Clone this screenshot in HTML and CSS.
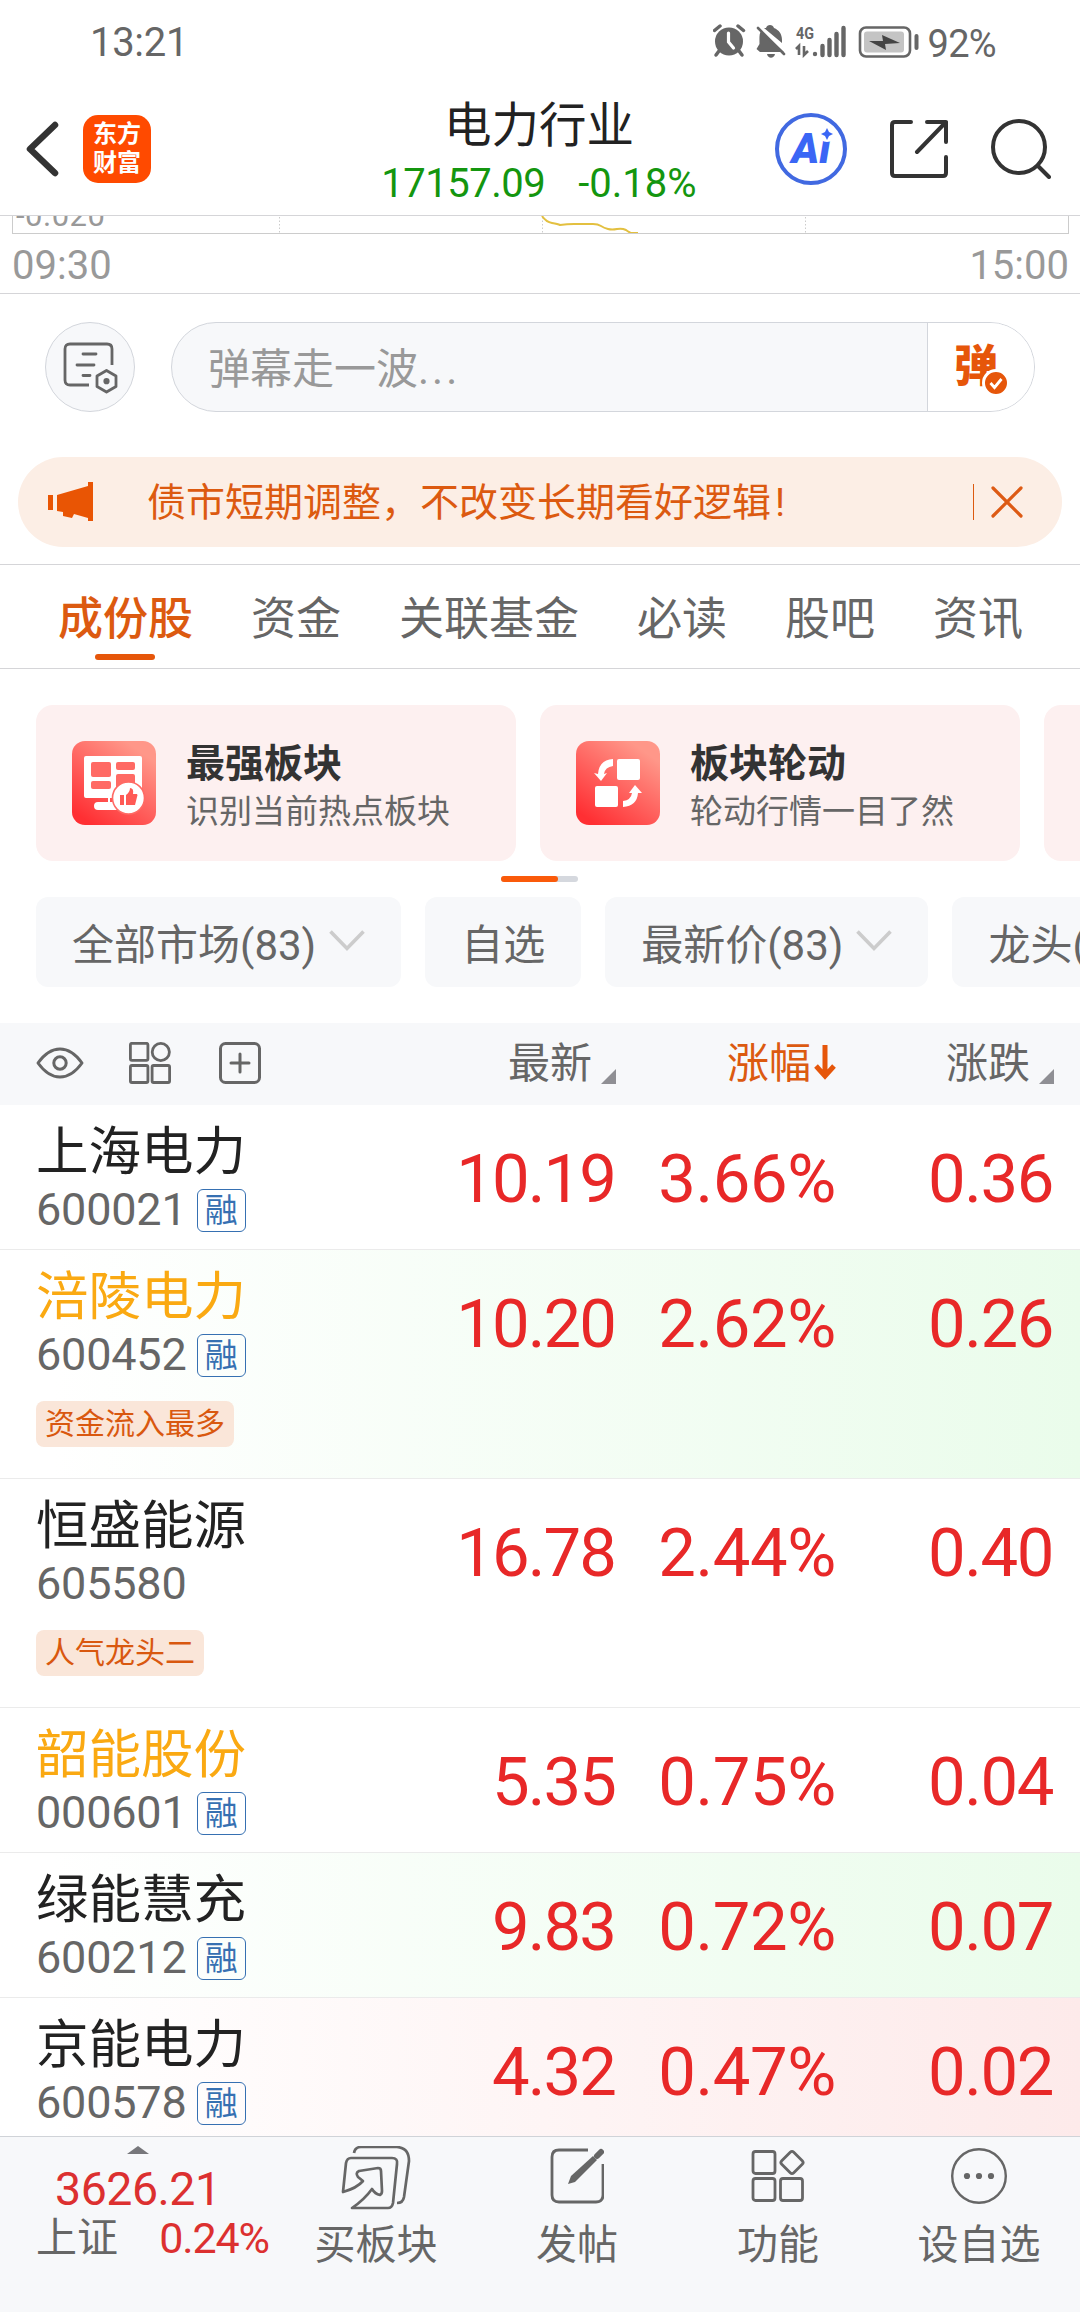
FILE: index.html
```html
<!DOCTYPE html>
<html lang="zh-CN">
<head>
    <meta charset="UTF-8">
    <title>电力行业</title>
    <link rel="stylesheet" href="styles.css">
</head>
<body>
    <div class="status_bar">
        <span class="time">13:21</span>
        <svg class="s_icons" width="208" height="36" viewBox="0 0 208 36" fill="#666">
            <!-- 闹钟 -->
            <circle cx="16" cy="19.500" r="14"/>
            <path d="M1.500 8.500L7 4M30.500 8.500L25 4" stroke="#666" stroke-width="3.500" stroke-linecap="round"/>
            <path d="M6 29l-3 4M26 29l3 4" stroke="#666" stroke-width="3.500" stroke-linecap="round"/>
            <path d="M15.500 11v9l5 6" fill="none" stroke="#fff" stroke-width="3.200" stroke-linecap="round"/>
            <!-- 静音 -->
            <path d="M47 30h24L48 9c-2 3-1.500 8-1.500 13l-3 5zM53 6c1-4 7-4 8 0 5 2 8 6 8 12v3L51 6zM54 32h8c-1 5-7 5-8 0z"/>
            <path d="M45 6l26 26" stroke="#666" stroke-width="2.600" stroke-linecap="round"/>
            <!-- 信号 -->
            <path d="M86 33v-9l-3 3M91 24v9l4-4" fill="none" stroke="#666" stroke-width="2.600"/>
            <circle cx="102" cy="32" r="2.200"/>
            <path d="M109.500 24v9M116.500 18v15M123.500 12v21M130.500 6v27" stroke="#666" stroke-width="4.400" stroke-linecap="round"/>
            <!-- 电池 -->
            <rect x="147" y="5.500" width="50" height="29" rx="6" fill="none" stroke="#666" stroke-width="2.600"/>
            <rect x="151" y="9.500" width="40" height="21" rx="3" fill="#c4c4c4"/>
            <path d="M156 19l14 0-1-6 18 8-15 1 1 6z" fill="#444"/>
            <path d="M203.500 14v12" stroke="#666" stroke-width="4" stroke-linecap="round"/>
            <text class="net" x="83" y="17" textLength="18" lengthAdjust="spacingAndGlyphs">4G</text>
        </svg>
        <span class="power">92%</span>
    </div>

    <div class="header">
        <div class="h_left">
            <svg width="34" height="58" viewBox="0 0 34 58"><path d="M30 5L5 29l25 24" fill="none" stroke="#333" stroke-width="6.500" stroke-linecap="round" stroke-linejoin="round"/></svg>
            <div class="logo"><span>东方</span><span>财富</span></div>
        </div>
        <div class="h_title">
            <h1>电力行业</h1>
            <p><span class="point">17157.09</span><span>-0.18%</span></p>
        </div>
        <div class="h_right">
            <div class="ai">Ai
                <svg width="16" height="16" viewBox="0 0 16 16"><circle cx="8" cy="8" r="8" fill="#fff"/><path d="M8 2l2 4 4 2-4 2-2 4-2-4-4-2 4-2z" fill="#3a66f5"/></svg>
            </div>
            <svg width="58" height="60" viewBox="0 0 58 60" fill="none" stroke="#333" stroke-width="4" stroke-linecap="round" stroke-linejoin="round"><path d="M21 3H5q-3 0-3 3v48q0 3 3 3h48q3 0 3-3V38M37 3h19v20M56 3L27 33"/></svg>
            <svg width="60" height="60" viewBox="0 0 60 60" fill="none" stroke="#333" stroke-width="4" stroke-linecap="round"><circle cx="28" cy="28" r="26"/><path d="M47 47l11 11"/></svg>
        </div>
    </div>

    <div class="chart">
        <div class="chart_box">
            <span>-0.020</span>
            <svg width="1056" height="18" viewBox="0 0 1056 18" fill="none">
                <path d="M266.500 1v17M529.500 1v17M792.500 1v17" stroke="#ccc" stroke-dasharray="1.500 2"/>
                <path d="M529 0q4 6 10 7t8 2q7-1 14-1t10 0t9 0q5 0 8 2t7 3t9 0t9 1q4 3 6 3h6" stroke="#e3c040" stroke-width="2"/>
            </svg>
        </div>
        <div class="chart_time"><span>09:30</span><span>15:00</span></div>
    </div>

    <div class="danmu">
        <div class="dm_set">
            <svg width="56" height="54" viewBox="0 0 56 54" fill="none" stroke="#666" stroke-width="2.800" stroke-linecap="round" stroke-linejoin="round">
                <path d="M27 43H8q-5 0-5-5V7q0-5 5-5h37q5 0 5 5v16" stroke-linecap="butt"/>
                <path d="M21 12h13M15 23h17M21 33.500h7"/>
                <path d="M44.500 28.500l9.500 5.500v10.500l-9.500 5.500-9.500-5.500V34z"/>
                <circle cx="44.500" cy="39.200" r="1.700" fill="#666"/>
            </svg>
        </div>
        <div class="dm_input">
            <span class="dm_text">弹幕走一波<span class="dots">...</span></span>
            <div class="dm_btn">弹
                <svg width="28" height="28" viewBox="0 0 28 28"><circle cx="14" cy="14" r="12.500" fill="#e6560a" stroke="#fff" stroke-width="3"/><path d="M8.500 14l4 4.500 7-8.500" fill="none" stroke="#fff" stroke-width="2.800"/></svg>
            </div>
        </div>
    </div>

    <div class="notice">
        <svg width="46" height="40" viewBox="0 0 46 40" fill="#e95504"><path d="M0 13h5v15H0zM9 13l31-9V0h5v39h-5v-3l-14-4-2 4-9-2v-4l-6-1z"/></svg>
        <span class="n_text">债市短期调整，不改变长期看好逻辑<span class="mark">!</span></span>
        <i></i>
        <svg width="32" height="32" viewBox="0 0 32 32"><path d="M2 2l28 28M30 2L2 30" stroke="#dd5a14" stroke-width="3.200" stroke-linecap="round"/></svg>
    </div>

    <div class="tabs">
        <span class="active">成份股</span>
        <span>资金</span>
        <span>关联基金</span>
        <span>必读</span>
        <span>股吧</span>
        <span>资讯</span>
    </div>

    <div class="cards">
        <div class="card">
            <div class="card_icon">
                <svg width="84" height="84" viewBox="0 0 84 84">
                    <path d="M14 15h54q2 0 2 2v40H38v4h8v8H26q-4 0-4-4t4-4h10v-4H14q-2 0-2-2V17q0-2 2-2z" fill="#fff"/>
                    <g fill="#ff6a64"><rect x="19" y="21" width="20" height="15" rx="2"/><rect x="19" y="40" width="20" height="8" rx="2"/><rect x="44" y="21" width="19" height="8" rx="2"/><rect x="44" y="33" width="19" height="15" rx="2"/></g>
                    <circle cx="56.500" cy="57" r="16" fill="#fff" stroke="#ff6a64" stroke-width="1.600"/>
                    <path d="M48 54h4v10h-4zM54 54q4-3 4-7 4 0 3 6h4q1 1 0 3l-2 8h-9z" fill="#ff5a55"/>
                </svg>
            </div>
            <div><h2>最强板块</h2><p>识别当前热点板块</p></div>
        </div>
        <div class="card">
            <div class="card_icon">
                <svg width="84" height="84" viewBox="0 0 84 84" fill="#fff">
                    <rect x="41" y="18" width="23" height="21" rx="2"/><rect x="19" y="45" width="23" height="21" rx="2"/>
                    <path d="M37 18v7q-8 1-9 8l3-1-6 8-7-8 4 1q1-14 15-15zM47 66v-6q8-1 9-8l-3 0 6-8 7 8h-4q-1 13-15 14z"/>
                </svg>
            </div>
            <div><h2>板块轮动</h2><p>轮动行情一目了然</p></div>
        </div>
        <div class="card"></div>
    </div>
    <div class="slider"><i></i></div>

    <div class="filters">
        <span class="f_item">全部市场(83)<svg width="36" height="22" viewBox="0 0 36 22"><path d="M1.500 1.500L18 18.500l16.500-17" fill="none" stroke="#ccc" stroke-width="3.600"/></svg></span>
        <span class="f_item">自选</span>
        <span class="f_item">最新价(83)<svg width="36" height="22" viewBox="0 0 36 22"><path d="M1.500 1.500L18 18.500l16.500-17" fill="none" stroke="#ccc" stroke-width="3.600"/></svg></span>
        <span class="f_item">龙头(5)</span>
    </div>

    <div class="t_head">
        <div class="t_tools">
            <svg width="48" height="42" viewBox="0 0 48 42" fill="none" stroke="#666" stroke-width="3"><path d="M2 21Q12 7 24 7t22 14Q36 35 24 35T2 21z" stroke-linejoin="round"/><circle cx="24" cy="21" r="6.200"/></svg>
            <svg width="42" height="42" viewBox="0 0 42 42" fill="none" stroke="#666" stroke-width="2.800"><rect x="1.400" y="1.300" width="17.500" height="17" rx="1.500"/><circle cx="31.800" cy="10" r="8.600"/><rect x="1.400" y="23.500" width="17.500" height="17" rx="1.500"/><rect x="23.100" y="23.500" width="17.500" height="17" rx="1.500"/></svg>
            <svg width="42" height="42" viewBox="0 0 42 42" fill="none" stroke="#666" stroke-width="3" stroke-linecap="round"><rect x="1.500" y="1.500" width="39" height="39" rx="5"/><path d="M21 12v18M12 21h18"/></svg>
        </div>
        <div class="col c1">最新<svg width="15" height="15" viewBox="0 0 15 15"><path d="M15 0v15H0z" fill="#8f8f94"/></svg></div>
        <div class="col c2 sort">涨幅<svg width="24" height="36" viewBox="0 0 24 36"><path d="M12 1v30M3 22l9 10 9-10" fill="none" stroke="#e6560a" stroke-width="5"/></svg></div>
        <div class="col c3">涨跌<svg width="15" height="15" viewBox="0 0 15 15"><path d="M15 0v15H0z" fill="#8f8f94"/></svg></div>
    </div>

    <div class="list">
        <div class="row">
            <div class="stock"><b>上海电力</b><p>600021<em>融</em></p></div>
            <span class="col c1">10.19</span><span class="col c2">3.66%</span><span class="col c3">0.36</span>
        </div>
        <div class="row tall green">
            <div class="stock mine"><b>涪陵电力</b><p>600452<em>融</em></p><i>资金流入最多</i></div>
            <span class="col c1">10.20</span><span class="col c2">2.62%</span><span class="col c3">0.26</span>
        </div>
        <div class="row tall">
            <div class="stock"><b>恒盛能源</b><p>605580</p><i>人气龙头二</i></div>
            <span class="col c1">16.78</span><span class="col c2">2.44%</span><span class="col c3">0.40</span>
        </div>
        <div class="row">
            <div class="stock mine"><b>韶能股份</b><p>000601<em>融</em></p></div>
            <span class="col c1">5.35</span><span class="col c2">0.75%</span><span class="col c3">0.04</span>
        </div>
        <div class="row green">
            <div class="stock"><b>绿能慧充</b><p>600212<em>融</em></p></div>
            <span class="col c1">9.83</span><span class="col c2">0.72%</span><span class="col c3">0.07</span>
        </div>
        <div class="row red">
            <div class="stock"><b>京能电力</b><p>600578<em>融</em></p></div>
            <span class="col c1">4.32</span><span class="col c2">0.47%</span><span class="col c3">0.02</span>
        </div>
    </div>

    <div class="footer">
        <div class="index">
            <svg width="22" height="8" viewBox="0 0 22 8"><path d="M11 0l11 8H0z" fill="#77777b"/></svg>
            <strong>3626.21</strong>
            <p><span>上证</span><span class="up">0.24%</span></p>
        </div>
        <div class="f_btn">
            <svg width="70" height="64" viewBox="0 0 70 64" fill="none" stroke="#666" stroke-width="2.700" stroke-linejoin="round">
                <path d="M13 7q1-6 7-6h36q12 1 12 14l-5 36q-1 6-7 6"/>
                <path d="M2 46L5 17q1-5 5-5h41q6 0 5 6l-4 39q-1 5-5 5H11q12-8 20-19 3 5 8 6 2-1 2-4l-1-20q0-3-3-3l-19 3q-4 2-1 6l5 4Q16 42 2 46z"/>
            </svg>买板块
        </div>
        <div class="f_btn">
            <svg width="54" height="64" viewBox="0 0 54 64" fill="none" stroke="#666" stroke-width="2.800">
                <path d="M38 4H9q-7 0-7 7v38q0 7 7 7h37q7 0 7-7V18"/>
                <path d="M18 38l3-8 22-20 4 4-22 22z" fill="#666" stroke="none"/><path d="M47 10l4-4" stroke-width="6" stroke-linecap="round"/>
            </svg>发帖
        </div>
        <div class="f_btn">
            <svg width="54" height="64" viewBox="0 0 54 64" fill="none" stroke="#666" stroke-width="2.800" stroke-linejoin="round"><rect x="2" y="5.500" width="22" height="22" rx="2.500"/><rect x="2" y="32.500" width="22" height="22" rx="2.500"/><rect x="29.500" y="32.500" width="22" height="22" rx="2.500"/><rect x="32.500" y="8" width="17" height="17" rx="2.500" transform="rotate(45 41 16.500)"/></svg>功能
        </div>
        <div class="f_btn">
            <svg width="58" height="64" viewBox="0 0 58 64" fill="#666"><circle cx="29" cy="30" r="26.800" fill="none" stroke="#666" stroke-width="2.400"/><circle cx="17" cy="30" r="3.100"/><circle cx="29" cy="30" r="3.100"/><circle cx="41" cy="30" r="3.100"/></svg>设自选
        </div>
    </div>
</body>
</html>
```
FILE: styles.css
```css
* {
    box-sizing: border-box;
    margin: 0;
    padding: 0;
}
body {
    display: flex;
    flex-direction: column;
    width: 1080px;
    height: 2312px;
    overflow: hidden;
    background-color: #fff;
    color: #666;
    font-family: Roboto, "Noto Sans CJK SC", sans-serif;
}
svg {
    display: block;
    flex: none;
}
i, em {
    font-style: normal;
}
/* 状态栏 */
.status_bar {
    display: flex;
    align-items: center;
    height: 86px;
    padding: 0 84px 0 90px;
    font-size: 40px;
    line-height: 46px;
}
.status_bar .time {
    flex: 1;
    letter-spacing: -0.3px;
}
.s_icons {
    margin: -6px 7px 0 0;
}
.net {
    font-size: 17px;
    font-weight: bold;
}
.power {
    font-size: 38px;
    letter-spacing: -0.7px;
    padding-top: 2px;
}
/* 顶部标题 */
.header {
    display: flex;
    justify-content: space-between;
    height: 130px;
    padding: 0 29px 0 25px;
    border-bottom: 1px solid #d5d5d8;
}
.h_left, .h_right {
    display: flex;
    align-items: center;
    width: 310px;
    padding-bottom: 4px;
}
.h_left {
    gap: 24px;
}
.logo {
    display: flex;
    flex-direction: column;
    justify-content: center;
    width: 68px;
    height: 68px;
    border-radius: 15px;
    background-color: #ff4a00;
    color: #fff;
    font-size: 24px;
    font-weight: bold;
    line-height: 29px;
    text-align: center;
}
.h_title {
    padding: 8px 0 0 2px;
    text-align: center;
    white-space: nowrap;
}
.h_title h1 {
    color: #222;
    font-size: 47.5px;
    font-weight: normal;
    line-height: 64px;
}
.h_title p {
    display: flex;
    gap: 33px;
    color: #14960f;
    font-size: 40px;
    line-height: 52px;
}
.h_title .point {
    letter-spacing: -0.5px;
}
.h_right {
    justify-content: flex-end;
    gap: 43px;
}
.ai {
    position: relative;
    width: 72px;
    height: 72px;
    border: 4px solid #4169e1;
    border-radius: 50%;
    color: #3a66f5;
    font-size: 42px;
    font-weight: 900;
    font-style: italic;
    line-height: 64px;
    text-align: center;
}
.ai svg {
    position: absolute;
    top: 9px;
    right: 8px;
}
/* 分时图底部 */
.chart {
    height: 78px;
    border-bottom: 1px solid #d5d5d8;
}
.chart_box {
    position: relative;
    height: 18px;
    margin: 0 11px 0 12px;
    border: 1px solid #ccc;
    border-top: none;
    overflow: hidden;
}
.chart_box span {
    position: absolute;
    left: 3px;
    bottom: 0;
    color: #999;
    font-size: 31px;
    letter-spacing: 0.5px;
    line-height: 34px;
}
.chart_time {
    display: flex;
    justify-content: space-between;
    padding: 8px 11px 0 12px;
    color: #999;
    font-size: 40px;
    line-height: 48px;
}
/* 弹幕 */
.danmu {
    display: flex;
    justify-content: space-between;
    padding: 28px 45px 0;
}
.dm_set {
    display: flex;
    align-items: center;
    justify-content: center;
    width: 90px;
    height: 90px;
    padding-top: 4px;
    border: 1px solid #d3d6dc;
    border-radius: 50%;
    background-color: #f7f8fa;
}
.dm_input {
    display: flex;
    width: 864px;
    height: 90px;
    border: 1px solid #d3d6dc;
    border-radius: 45px;
    background-color: #f7f8fa;
    overflow: hidden;
}
.dm_text {
    flex: 1;
    padding-left: 36px;
    color: #999;
    font-size: 42px;
    line-height: 94px;
}
.dots {
    letter-spacing: 3px;
}
.dm_btn {
    position: relative;
    width: 107px;
    padding-left: 26px;
    border-left: 1px solid #d3d6dc;
    background-color: #fff;
    color: #e6560a;
    font-size: 44px;
    font-weight: 900;
    line-height: 88px;
}
.dm_btn svg {
    position: absolute;
    left: 54px;
    top: 46px;
}
/* 公告 */
.notice {
    display: flex;
    align-items: center;
    height: 90px;
    margin: 45px 18px 17px;
    padding: 0 39px 0 30px;
    border-radius: 45px;
    background-color: #fceee5;
    color: #dc5a10;
}
.n_text {
    flex: 1;
    padding: 1px 0 0 53px;
    font-size: 39px;
    line-height: 50px;
}
.mark {
    padding-left: 4px;
}
.notice i {
    width: 1px;
    height: 36px;
    margin-right: 17px;
    background-color: #dc5a10;
}
/* 导航 */
.tabs {
    display: flex;
    gap: 58px;
    height: 105px;
    padding-left: 58px;
    border-top: 1px solid #d5d5d8;
    border-bottom: 1px solid #d5d5d8;
    font-size: 45px;
    line-height: 110px;
    white-space: nowrap;
}
.tabs .active {
    position: relative;
    color: #dc5a10;
    font-weight: 500;
}
.tabs .active::after {
    content: "";
    position: absolute;
    left: 37px;
    bottom: 8px;
    width: 60px;
    height: 6px;
    border-radius: 3px;
    background-color: #e6560a;
}
/* 入口卡片 */
.cards {
    display: flex;
    gap: 24px;
    padding: 36px 0 0 36px;
    overflow: hidden;
}
.card {
    display: flex;
    flex: none;
    gap: 30px;
    width: 480px;
    height: 156px;
    padding: 36px;
    border-radius: 17px;
    background-color: #fdf0f0;
    white-space: nowrap;
}
.card_icon {
    width: 84px;
    height: 84px;
    border-radius: 13px;
    background: linear-gradient(35deg, #ff2f33 10%, #ff5f5c 45%, #ff9789 85%);
}
.card h2 {
    color: #333;
    font-size: 39px;
    font-weight: bold;
    line-height: 46px;
}
.card p {
    font-size: 33px;
    line-height: 50px;
}
.slider {
    width: 77px;
    height: 6px;
    margin: 15px 0 15px 501px;
    border-radius: 3px;
    background-color: #d5d8de;
}
.slider i {
    display: block;
    width: 57px;
    height: 6px;
    border-radius: 3px;
    background-color: #fa5a0a;
}
/* 筛选 */
.filters {
    display: flex;
    gap: 24px;
    height: 126px;
    padding: 0 0 36px 36px;
    overflow: hidden;
}
.f_item {
    display: flex;
    flex: none;
    align-items: center;
    gap: 13px;
    padding: 0 36px 2px;
    border-radius: 12px;
    background-color: #f7f8fa;
    font-size: 42px;
    white-space: nowrap;
}
/* 表头 */
.t_head {
    display: flex;
    height: 82px;
    background-color: #f7f8fa;
    font-size: 42px;
    line-height: 82px;
}
.t_tools {
    display: flex;
    flex: 1;
    align-items: center;
    gap: 46px;
    padding: 0 0 2px 36px;
}
.t_tools svg + svg {
    margin-left: -1px;
}
.t_tools svg + svg + svg {
    margin-left: 2px;
}
.col {
    text-align: right;
    white-space: nowrap;
}
.c1 {
    width: 230px;
}
.c2 {
    width: 221px;
}
.c3 {
    width: 217px;
    margin-right: 27px;
}
.t_head .col {
    display: flex;
    justify-content: flex-end;
}
.t_head .col svg {
    margin: 46px -1px 0 9px;
}
.t_head .sort {
    color: #dc5a10;
}
.t_head .sort svg {
    margin: 21px -1px 0 2px;
}
/* 股票列表 */
.list {
    flex: 1;
    min-height: 0;
    overflow: hidden;
}
.row {
    display: flex;
    height: 145px;
    border-bottom: 1px solid #ebebeb;
}
.tall {
    height: 229px;
}
.green {
    background: linear-gradient(to right, #fff 0%, #fff 5%, #eafceb 100%);
}
.red {
    background: linear-gradient(to right, #fff 0%, #fff 5%, #fdeaea 100%);
}
.row .col {
    color: #e82828;
    font-size: 67px;
    letter-spacing: -1.4px;
    line-height: 148px;
}
.row .c1 {
    letter-spacing: -1.9px;
}
.row .c2 {
    letter-spacing: -0.4px;
}
.stock {
    flex: 1;
    padding: 14px 0 0 36px;
}
.stock b {
    display: block;
    color: #222;
    font-size: 52.5px;
    font-weight: normal;
    line-height: 66px;
}
.mine b {
    color: #faa912;
}
.stock p {
    display: flex;
    height: 48px;
    font-size: 45px;
    letter-spacing: -0.2px;
    line-height: 49px;
}
.stock em {
    width: 49px;
    height: 43px;
    margin: 4px 0 0 10px;
    border: 1px solid #3670b2;
    border-radius: 6px;
    color: #3670b2;
    font-size: 33px;
    line-height: 41px;
    text-align: center;
}
.stock i {
    display: inline-block;
    height: 46px;
    margin-top: 23px;
    padding: 0 9px;
    border-radius: 8px;
    background-color: #fae6d9;
    color: #d9580f;
    font-size: 30px;
    line-height: 46px;
}
/* 底部栏 */
.footer {
    display: flex;
    height: 176px;
    border-top: 1px solid #d0d3d8;
    background-color: #f7f8fa;
}
.index {
    width: 276px;
    padding: 9px 0 0 36px;
    line-height: 50px;
}
.index svg {
    margin-left: 91px;
}
.index strong {
    display: block;
    margin: 10px 0 -1px 19px;
    color: #dc3030;
    font-size: 46.5px;
    font-weight: normal;
    letter-spacing: -0.5px;
}
.index p {
    display: flex;
    justify-content: space-between;
    padding-right: 7px;
    font-size: 41px;
}
.index .up {
    color: #dc3030;
    font-size: 43px;
    letter-spacing: -1.1px;
}
.f_btn {
    display: flex;
    flex: 1;
    flex-direction: column;
    align-items: center;
    padding: 9px 1px 0 0;
    font-size: 41px;
    line-height: 70px;
}
```
